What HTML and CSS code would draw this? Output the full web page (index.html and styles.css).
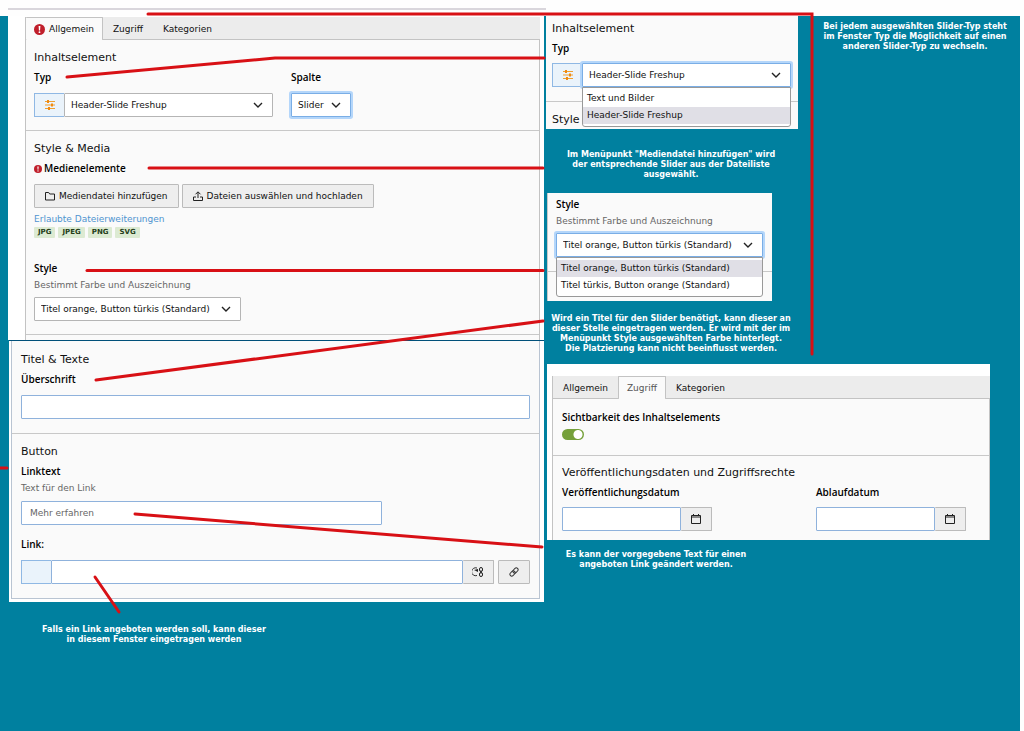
FILE: index.html
```html
<!DOCTYPE html>
<html lang="de">
<head>
    <meta charset="UTF-8">
    <meta name="viewport" content="width=device-width, initial-scale=1.0">
    <title>Header-Slide Freshup</title>
    <link rel="stylesheet" href="styles.css">
</head>
<body>
    <!-- Shared icons -->
    <svg class="sprite" aria-hidden="true">
        <symbol id="chevron" viewBox="0 0 10 10"><path d="M1 3l4 4 4-4" fill="none" stroke="#222" stroke-width="1.4"/></symbol>
        <symbol id="alert" viewBox="0 0 12 12"><circle cx="6" cy="6" r="6" fill="#c01f2b"/><path d="M5 2.2h2L6.6 7H5.4z" fill="#fff"/><circle cx="6" cy="8.9" r="1" fill="#fff"/></symbol>
        <symbol id="sliders" viewBox="0 0 10 10"><path d="M0 1.5h10M0 5h10M0 8.5h10" stroke="#f0a030" stroke-width="1.2"/><path d="M3 0v3M7 3.5v3M4 7v3" stroke="#f08a10" stroke-width="2"/></symbol>
        <symbol id="calendar" viewBox="0 0 10 10"><path d="M.5 1.5h9v8h-9zM.5 3h9M2.5 0v2M7.5 0v2" fill="none" stroke="#222"/></symbol>
    </svg>

    <header class="page-top"><div class="page-rule"></div></header>

    <main class="board">
        <div class="column">
            <section class="panel panel-main">
                <nav class="tabs">
                    <button type="button" class="tab active"><svg class="alert"><use href="#alert"/></svg>Allgemein</button>
                    <button type="button" class="tab">Zugriff</button>
                    <button type="button" class="tab">Kategorien</button>
                </nav>
                <div class="tab-body">
                    <div class="group">
                        <h2>Inhaltselement</h2>
                        <div class="fields">
                            <div class="field field-type">
                                <label for="typ">Typ</label>
                                <div class="input-group">
                                    <span class="addon"><svg class="icon"><use href="#sliders"/></svg></span>
                                    <div class="select">
                                        <select id="typ"><option>Header-Slide Freshup</option></select>
                                        <svg class="chevron"><use href="#chevron"/></svg>
                                    </div>
                                </div>
                            </div>
                            <div class="field">
                                <label for="spalte">Spalte</label>
                                <div class="select select-column focused">
                                    <select id="spalte"><option>Slider</option></select>
                                    <svg class="chevron"><use href="#chevron"/></svg>
                                </div>
                            </div>
                        </div>
                    </div>
                    <div class="group">
                        <h2>Style &amp; Media</h2>
                        <h3><svg class="alert-small"><use href="#alert"/></svg>Medienelemente</h3>
                        <div class="buttons">
                            <button type="button" class="btn"><svg class="icon" viewBox="0 0 10 10"><path d="M.5 1.5h3.2l1 1.5h4.8v6h-9z" fill="none" stroke="#222"/></svg>Mediendatei hinzufügen</button>
                            <button type="button" class="btn"><svg class="icon" viewBox="0 0 10 10"><path d="M5 7V1M2.5 3.3L5 .8l2.5 2.5M3 6H.5v3.5h9V6H7" fill="none" stroke="#222"/></svg>Dateien auswählen und hochladen</button>
                        </div>
                        <a class="extensions" href="#">Erlaubte Dateierweiterungen</a>
                        <div class="badges">
                            <span class="badge">JPG</span>
                            <span class="badge">JPEG</span>
                            <span class="badge">PNG</span>
                            <span class="badge">SVG</span>
                        </div>
                        <div class="style-field">
                            <label for="style">Style</label>
                            <p class="hint">Bestimmt Farbe und Auszeichnung</p>
                            <div class="select select-style">
                                <select id="style"><option>Titel orange, Button türkis (Standard)</option></select>
                                <svg class="chevron"><use href="#chevron"/></svg>
                            </div>
                        </div>
                    </div>
                    <div class="group-end"></div>
                </div>
            </section>

            <section class="panel panel-texts">
                <div class="frame">
                    <div class="group">
                        <h2>Titel &amp; Texte</h2>
                        <label for="title">Überschrift</label>
                        <input id="title" type="text">
                    </div>
                    <div class="group">
                        <h2>Button</h2>
                        <label for="linktext">Linktext</label>
                        <p class="hint">Text für den Link</p>
                        <input id="linktext" class="input-linktext" type="text" value="Mehr erfahren">
                        <label class="label-link" for="link">Link:</label>
                        <div class="input-group">
                            <span class="addon"></span>
                            <input id="link" type="text">
                            <button type="button" class="btn-icon attached" aria-label="Link umschalten"><svg class="icon-wide" viewBox="0 0 12 10"><path d="M5 1A4 4 0 1 0 5 8.5" fill="none" stroke="#333"/><path d="M2 3l4-1v3z" fill="#222"/><rect x="7.5" y=".5" width="3" height="4" rx="1.5" fill="none" stroke="#222"/><rect x="7.5" y="5.5" width="3" height="4" rx="1.5" fill="none" stroke="#222"/><path d="M9 3.5v3" stroke="#222"/></svg></button>
                            <button type="button" class="btn-icon" aria-label="Link auswählen"><svg class="icon" viewBox="0 0 10 10"><g transform="rotate(-45 5 5)" fill="none" stroke="#333"><rect x="0" y="3.2" width="5.8" height="3.6" rx="1.8"/><rect x="4.2" y="3.2" width="5.8" height="3.6" rx="1.8"/></g></svg></button>
                        </div>
                    </div>
                </div>
            </section>

            <p class="note note-link">Falls ein Link angeboten werden soll, kann dieser<br>in diesem Fenster eingetragen werden</p>
        </div>

        <div class="column">
            <div class="row-top">
                <section class="panel panel-type">
                    <div class="group">
                        <h2>Inhaltselement</h2>
                        <label for="typ-open">Typ</label>
                        <div class="input-group">
                            <span class="addon"><svg class="icon"><use href="#sliders"/></svg></span>
                            <div class="select focused">
                                <select id="typ-open"><option>Header-Slide Freshup</option></select>
                                <svg class="chevron"><use href="#chevron"/></svg>
                                <ul class="menu">
                                    <li>Text und Bilder</li>
                                    <li class="selected">Header-Slide Freshup</li>
                                </ul>
                            </div>
                        </div>
                    </div>
                    <div class="group">
                        <h2>Style</h2>
                    </div>
                </section>
                <p class="note note-type">Bei jedem ausgewählten Slider-Typ steht<br>im Fenster Typ die Möglichkeit auf einen<br>anderen Slider-Typ zu wechseln.</p>
            </div>

            <p class="note note-media">Im Menüpunkt "Mediendatei hinzufügen" wird<br>der entsprechende Slider aus der Dateiliste<br>ausgewählt.</p>

            <section class="panel panel-style">
                <div class="group">
                    <label for="style-open">Style</label>
                    <p class="hint">Bestimmt Farbe und Auszeichnung</p>
                    <div class="select select-style focused">
                        <select id="style-open"><option>Titel orange, Button türkis (Standard)</option></select>
                        <svg class="chevron"><use href="#chevron"/></svg>
                        <ul class="menu">
                            <li class="selected">Titel orange, Button türkis (Standard)</li>
                            <li>Titel türkis, Button orange (Standard)</li>
                        </ul>
                    </div>
                </div>
                <div class="group-end"></div>
            </section>

            <p class="note note-title">Wird ein Titel für den Slider benötigt, kann dieser an<br>dieser Stelle eingetragen werden. Er wird mit der im<br>Menüpunkt Style ausgewählten Farbe hinterlegt.<br>Die Platzierung kann nicht beeinflusst werden.</p>

            <section class="panel panel-access">
                <nav class="tabs">
                    <button type="button" class="tab">Allgemein</button>
                    <button type="button" class="tab active muted">Zugriff</button>
                    <button type="button" class="tab">Kategorien</button>
                </nav>
                <div class="tab-body">
                    <div class="group group-visibility">
                        <label for="visible">Sichtbarkeit des Inhaltselements</label>
                        <input id="visible" class="toggle" type="checkbox" role="switch" checked>
                    </div>
                    <div class="group">
                        <h2>Veröffentlichungsdaten und Zugriffsrechte</h2>
                        <div class="dates">
                            <div>
                                <label for="start">Veröffentlichungsdatum</label>
                                <div class="input-group">
                                    <input id="start" class="input-date" type="text">
                                    <button type="button" class="btn-icon attached" aria-label="Datum wählen"><svg class="icon"><use href="#calendar"/></svg></button>
                                </div>
                            </div>
                            <div>
                                <label for="end">Ablaufdatum</label>
                                <div class="input-group">
                                    <input id="end" class="input-date" type="text">
                                    <button type="button" class="btn-icon attached" aria-label="Datum wählen"><svg class="icon"><use href="#calendar"/></svg></button>
                                </div>
                            </div>
                        </div>
                    </div>
                </div>
            </section>

            <p class="note note-button">Es kann der vorgegebene Text für einen<br>angeboten Link geändert werden.</p>
        </div>

        <!-- Red pointers from the fields to their notes -->
        <svg class="pointers" viewBox="0 0 1020 731" preserveAspectRatio="none" aria-hidden="true">
            <path d="M148 14H812V354"/>
            <path d="M67 77L275 58H544"/>
            <path d="M149 168H543"/>
            <path d="M87 270.500H543"/>
            <path d="M96 380L543 321"/>
            <path d="M135 514L542 547"/>
            <path d="M95 577L119 612"/>
            <path d="M0 468H7"/>
        </svg>
    </main>
</body>
</html>
```

FILE: styles.css
```css
* {
    box-sizing: border-box;
}
body {
    margin: 0;
    background: #fefefe;
    color: #111;
    font-family: 'DejaVu Sans', Verdana, sans-serif;
    font-size: 9px;
    line-height: 16px;
}
h2, h3, p, ul {
    margin: 0;
    padding: 0;
}
button, input, select {
    font: inherit;
    color: inherit;
    margin: 0;
    border-radius: 1px;
}
.sprite {
    position: absolute;
    width: 0;
    height: 0;
}
.page-top {
    height: 16px;
    padding: 8px 0 0 8px;
}
.page-rule {
    width: 53%;
    height: 2px;
    background: #d9d6dc;
}

/* Board */
.board {
    position: relative;
    display: grid;
    grid-template-columns: 536fr 476fr;
    min-height: calc(100vh - 16px);
    margin-right: 4px;
    padding-left: 8px;
    background: #00809f;
}
.column {
    min-width: 0;
}
.pointers {
    position: absolute;
    top: -16px;
    left: 0;
    width: 100%;
    height: 731px;
    fill: none;
    stroke: #d81015;
    stroke-width: 3px;
    stroke-linecap: round;
    pointer-events: none;
}
.panel {
    background: #fafafa;
}
.panel-main {
    padding: 1px 4px 0 17px;
    background: #fff;
}
.panel-texts {
    margin-left: 1px;
    padding: 0 4px 3px 2px;
    border-top: 1px solid #00507a;
    background: #fff;
}
.frame {
    padding-top: 1px;
    border: 1px solid #b9c4d2;
    border-top: 0;
    background: #fafafa;
}
.panel-type {
    width: 252px;
    margin-left: 2px;
}
.panel-style {
    width: 225px;
    margin: 13px 0 0 3px;
    border-left: 1px solid #c8c8c8;
}
.panel-access {
    width: 443px;
    margin: 10px 0 0 3px;
    padding: 12px 0 0 5px;
    background: #fff;
}

/* Tabs */
.tabs {
    display: flex;
    height: 23px;
    border-left: 1px solid #c3c3c3;
    border-bottom: 1px solid #c3c3c3;
    background: #ececec;
}
.tab {
    display: flex;
    align-items: center;
    height: 23px;
    padding: 0 9px;
    border: 1px solid transparent;
    border-bottom: 0;
    background: none;
}
.tab.active {
    padding: 0 8px;
    border-color: #c3c3c3;
    border-left: 0;
    background: #fafafa;
}
.tab.muted {
    border-left: 1px solid #c3c3c3;
    color: #555;
}
.tab-body {
    border: 1px solid #c3c3c3;
    border-width: 0 1px 0 1px;
    background: #fafafa;
}

/* Groups */
.group {
    padding: 10px 9px 13px 8px;
}
.group + .group, .group-end {
    border-top: 1px solid #c8c8c8;
}
.group-end {
    height: 6px;
}
h2 {
    margin-bottom: 3px;
    font-size: 11px;
    font-weight: 400;
}
label, h3 {
    display: block;
    margin-bottom: 8px;
    font-family: 'Open Sans', 'Noto Sans', sans-serif;
    font-size: 10px;
    font-weight: 600;
    color: #000;
}
.hint {
    color: #666;
}
.fields {
    display: flex;
    gap: 18px;
}
.field-type {
    width: 239px;
}
.buttons {
    display: flex;
    gap: 3px;
    margin-bottom: 3px;
}
.badges {
    display: flex;
    gap: 3px;
    margin-bottom: 22px;
}
.badge {
    padding: 0 4px;
    border-radius: 1px;
    background: #dcead2;
    color: #243d18;
    font-size: 7px;
    font-weight: 700;
    line-height: 11px;
}
.extensions {
    display: block;
    color: #4f94d0;
    text-decoration: none;
}

/* Controls */
input[type="text"], .select select {
    display: block;
    width: 100%;
    height: 24px;
    border: 1px solid #8fb2dc;
    background: #fff;
}
input[type="text"] {
    padding: 0 8px;
    color: #666;
}
.select {
    position: relative;
    flex: 1;
}
.select select {
    padding: 0 6px;
    border-color: #b5b5b5;
    appearance: none;
}
.focused select {
    border-color: #7aaee6;
    box-shadow: 0 0 0 2px #b4d6fa;
}
.select-column {
    width: 60px;
}
.select-style {
    width: 207px;
}
.input-group {
    display: flex;
}
.addon {
    display: flex;
    flex: none;
    align-items: center;
    justify-content: center;
    width: 30px;
    border: 1px solid #8fb8e4;
    border-right: 0;
    background: #eaf3fb;
}
.chevron {
    position: absolute;
    top: 7px;
    right: 10px;
    width: 10px;
    height: 10px;
    pointer-events: none;
}
.icon {
    width: 10px;
    height: 10px;
}
.icon-wide {
    width: 12px;
    height: 10px;
}
.alert {
    width: 11px;
    height: 11px;
    margin-right: 4px;
}
.alert-small {
    width: 8px;
    height: 8px;
    margin-right: 2px;
    vertical-align: -1px;
}
.btn, .btn-icon {
    display: flex;
    align-items: center;
    justify-content: center;
    height: 24px;
    border: 1px solid #bbb;
    background: #eee;
}
.btn {
    gap: 4px;
    padding: 0 10px;
}
.btn-icon {
    flex: none;
    width: 32px;
    margin-left: 3px;
    padding: 0;
}
.btn-icon.attached {
    width: 31px;
    margin-left: 0;
    border-left: 0;
}
.toggle {
    display: block;
    width: 22px;
    height: 11px;
    border-radius: 6px;
    background: radial-gradient(circle at 16px 50%, #fff 4px, #75a03a 5px);
    appearance: none;
}
.menu {
    position: absolute;
    top: 24px;
    left: 0;
    z-index: 1;
    width: 100%;
    padding: 2px 0;
    border: 1px solid #999;
    border-radius: 0 0 3px 3px;
    background: #fff;
    list-style: none;
}
.menu li {
    padding: 0 4px;
    line-height: 17px;
    white-space: nowrap;
}
.menu .selected {
    background: #e0dfe6;
}

/* Panel details */
.style-field label, .panel-style label, label[for="linktext"] {
    margin-bottom: 1px;
}
.style-field .hint, .panel-style .hint {
    margin-bottom: 4px;
}
.panel-texts .hint {
    margin-bottom: 5px;
}
.panel-texts .group {
    padding: 10px 9px 14px 9px;
}
.input-linktext[type="text"] {
    width: 71%;
}
.label-link {
    margin-top: 11px;
}
.panel-texts .btn-icon.attached + .btn-icon {
    margin-left: 4px;
}
.panel-type .group {
    padding: 5px 7px 14px 6px;
}
.panel-type .group + .group {
    padding: 10px 6px 1px;
}
.panel-type .group + .group h2 {
    margin-bottom: 0;
}
.panel-type label {
    margin-bottom: 7px;
}
.panel-style .group {
    padding: 3px 8px 14px 8px;
}
.panel-style .group-end {
    height: 30px;
}
.panel-access label {
    margin-bottom: 7px;
}
.panel-access .group {
    padding: 9px;
}
.panel-access .group-visibility {
    padding: 10px 9px 15px;
}
.panel-access .group-visibility label {
    margin-bottom: 4px;
}
.dates {
    display: grid;
    grid-template-columns: 254px 1fr;
}
.input-date[type="text"] {
    width: 119px;
}

/* Notes */
.note {
    width: 254px;
    color: #fff;
    font-size: 8px;
    font-weight: 700;
    line-height: 10px;
    text-align: center;
    white-space: nowrap;
}
.row-top {
    display: flex;
}
.note-type {
    flex: 1;
    padding: 6px 7px 0 19px;
}
.note-media {
    margin-top: 21px;
}
.note-title {
    margin-top: 13px;
}
.note-button {
    width: 224px;
    margin-top: 10px;
}
.note-link {
    width: 292px;
    margin-top: 23px;
}
```
